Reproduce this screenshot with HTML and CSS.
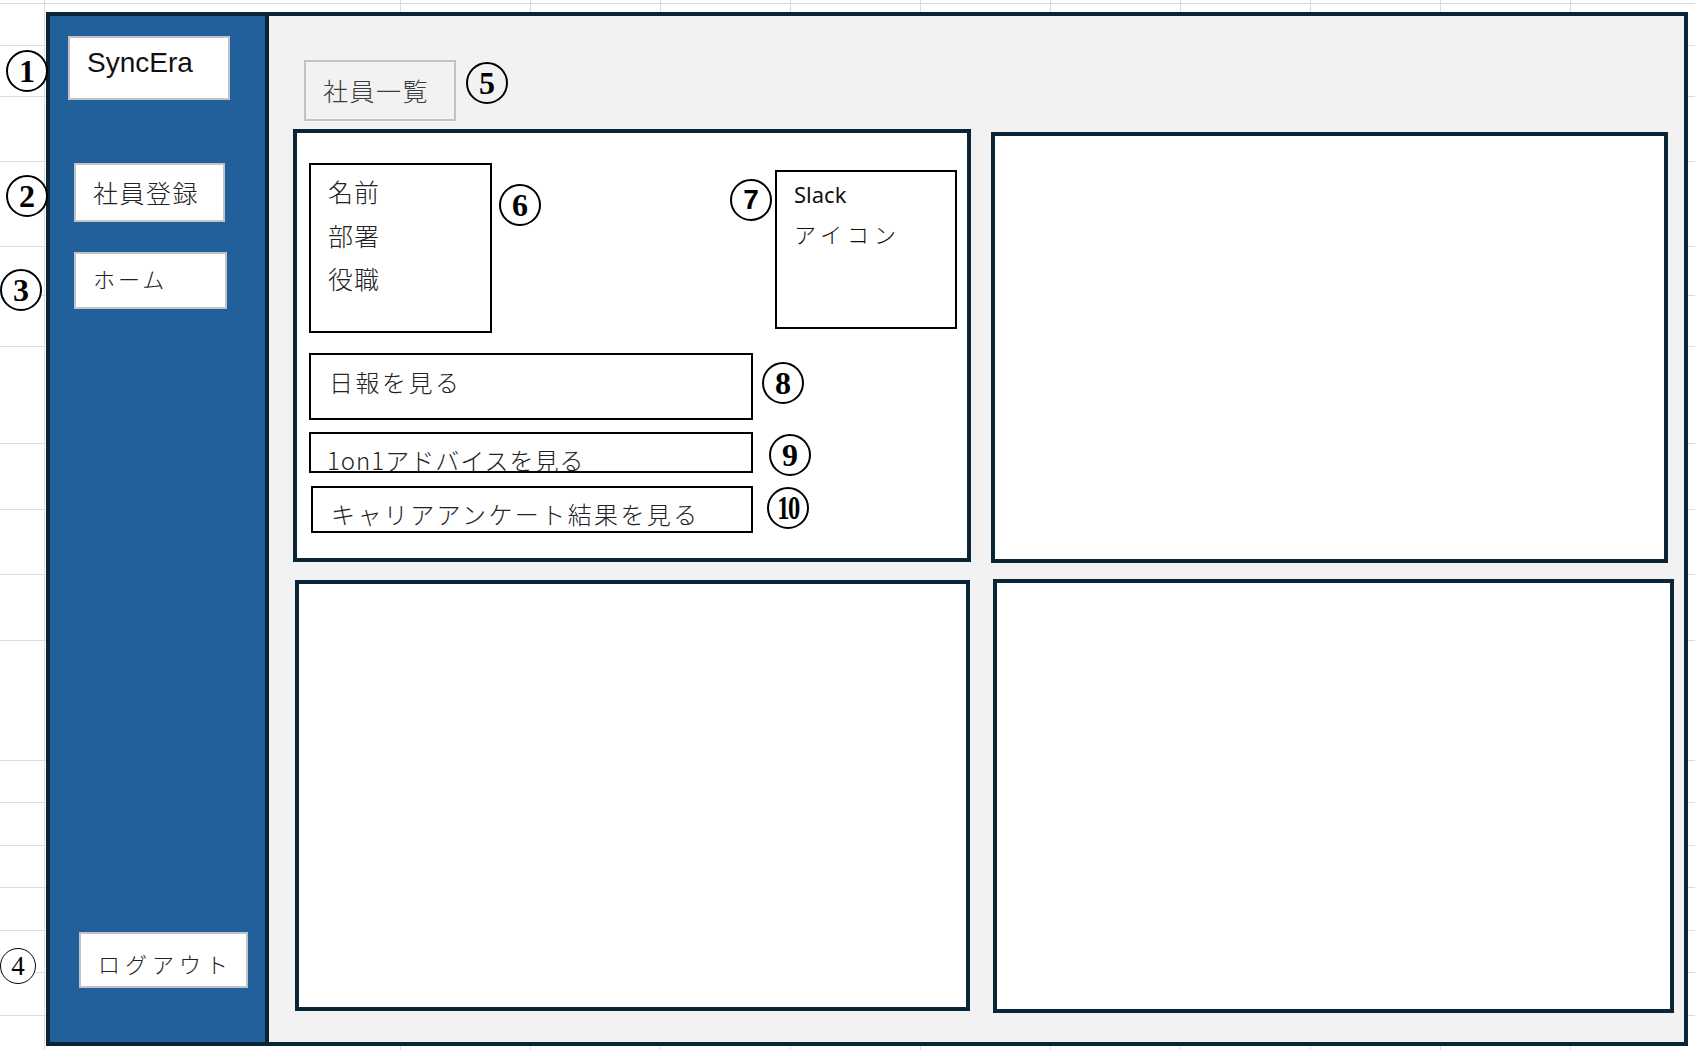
FILE: index.html
```html
<!DOCTYPE html>
<html lang="ja">
<head>
<meta charset="utf-8">
<title>SyncEra 社員一覧</title>
<link rel="stylesheet" href="styles.css">
</head>
<body>
<div class="frame">
  <aside class="sidebar">
    <div class="logo">SyncEra</div>
    <div class="side-btn btn-register">社員登録</div>
    <div class="side-btn btn-home">ホーム</div>
    <div class="side-btn btn-logout">ログアウト</div>
  </aside>
  <main class="main">
    <div class="page-title">社員一覧</div>
    <div class="cards">
      <section class="card card-1">
        <div class="card-top">
          <div class="profile">
            <div>名前</div>
            <div>部署</div>
            <div>役職</div>
          </div>
          <div class="slack">
            <div class="slack-title">Slack</div>
            <div class="slack-sub">アイコン</div>
          </div>
        </div>
        <div class="card-actions">
          <div class="action action-report">日報を見る</div>
          <div class="action action-1on1">1on1アドバイスを見る</div>
          <div class="action action-career">キャリアアンケート結果を見る</div>
        </div>
      </section>
      <section class="card card-2"></section>
      <section class="card card-3"></section>
      <section class="card card-4"></section>
    </div>
  </main>
</div>

<span class="mark m1 on-sheet">1</span>
<span class="mark m2 on-sheet">2</span>
<span class="mark m3 on-sheet">3</span>
<span class="mark m4 on-sheet">4</span>
<span class="mark m5">5</span>
<span class="mark m6">6</span>
<span class="mark m7">7</span>
<span class="mark m8">8</span>
<span class="mark m9">9</span>
<span class="mark m10"><span class="narrow">10</span></span>
</body>
</html>
```
FILE: styles.css
```css
html, body {
  margin: 0;
  padding: 0;
}

body {
  position: relative;
  width: 1695px;
  height: 1050px;
  overflow: hidden;
  background-color: #ffffff;
  background-image:
    linear-gradient(#dcdcdc, #dcdcdc),
    repeating-linear-gradient(to right, #dcdcdc 0 1px, transparent 1px 130px),
    linear-gradient(#dcdcdc, #dcdcdc),
    linear-gradient(#dcdcdc, #dcdcdc),
    linear-gradient(#dcdcdc, #dcdcdc),
    linear-gradient(#dcdcdc, #dcdcdc),
    linear-gradient(#dcdcdc, #dcdcdc),
    linear-gradient(#dcdcdc, #dcdcdc),
    linear-gradient(#dcdcdc, #dcdcdc),
    linear-gradient(#dcdcdc, #dcdcdc),
    linear-gradient(#dcdcdc, #dcdcdc),
    linear-gradient(#dcdcdc, #dcdcdc),
    linear-gradient(#dcdcdc, #dcdcdc),
    linear-gradient(#dcdcdc, #dcdcdc),
    linear-gradient(#dcdcdc, #dcdcdc),
    linear-gradient(#dcdcdc, #dcdcdc),
    linear-gradient(#dcdcdc, #dcdcdc),
    linear-gradient(#dcdcdc, #dcdcdc),
    linear-gradient(#dcdcdc, #dcdcdc),
    linear-gradient(#dcdcdc, #dcdcdc);
  background-repeat: no-repeat;
  background-position:
    44px 0,
    400px 0,
    0 3px,
    0 45px,
    0 96px,
    0 161px,
    0 246px,
    0 295px,
    0 346px,
    0 443px,
    0 509px,
    0 574px,
    0 640px,
    0 760px,
    0 802px,
    0 845px,
    0 887px,
    0 930px,
    0 972px,
    0 1015px;
  background-size:
    1px 100%,
    1300px 100%,
    100% 1px, 100% 1px, 100% 1px, 100% 1px, 100% 1px, 100% 1px,
    100% 1px, 100% 1px, 100% 1px, 100% 1px, 100% 1px, 100% 1px,
    100% 1px, 100% 1px, 100% 1px, 100% 1px, 100% 1px, 100% 1px;
  font-family: "Noto Sans CJK JP", "Noto Sans", sans-serif;
  color: #222;
}

/* ---------- frame ---------- */
.frame {
  box-sizing: border-box;
  margin: 12px 0 0 46px;
  width: 1642px;
  height: 1034px;
  border: 4px solid #0a2535;
  display: flex;
}

/* ---------- sidebar ---------- */
.sidebar {
  box-sizing: border-box;
  width: 219px;
  flex: 0 0 219px;
  background: #22609c;
  border-right: 4px solid #0a2535;
  display: flex;
  flex-direction: column;
  align-items: flex-start;
}

.logo {
  box-sizing: border-box;
  margin: 20px 0 0 18px;
  width: 162px;
  height: 64px;
  padding: 11px 0 0 17px;
  background: #fff;
  border: 2px solid #c3c3c3;
  font-family: "Liberation Sans", Arial, sans-serif;
  font-size: 28px;
  line-height: 28px;
  color: #111;
}

.side-btn {
  box-sizing: border-box;
  display: flex;
  align-items: center;
  background: #fff;
  border: 2px solid #c3c3c3;
  font-family: "Noto Sans CJK JP", sans-serif;
  font-weight: 300;
  color: #222;
  white-space: nowrap;
}

.btn-register {
  margin: 63px 0 0 24px;
  width: 151px;
  height: 59px;
  padding: 0 0 2px 17px;
  font-size: 25px;
  letter-spacing: 1.5px;
}

.btn-home {
  margin: 30px 0 0 24px;
  width: 153px;
  height: 57px;
  padding: 0 0 6px 17px;
  font-size: 22px;
  letter-spacing: 3px;
}

.btn-logout {
  margin: auto 0 54px 29px;
  width: 169px;
  height: 56px;
  padding: 6px 0 0 17px;
  font-size: 22px;
  letter-spacing: 5px;
}

/* ---------- main ---------- */
.main {
  flex: 1;
  background: #f2f2f2;
  padding-top: 44px;
  display: flex;
  flex-direction: column;
}

.page-title {
  box-sizing: border-box;
  margin-left: 35px;
  width: 152px;
  height: 61px;
  padding: 0 0 2px 17px;
  display: flex;
  align-items: center;
  border: 2px solid #c3c3c3;
  font-weight: 300;
  font-size: 25px;
  letter-spacing: 1.5px;
  color: #3c3c3c;
}

.cards {
  margin: 8px 0 0 24px;
  display: grid;
  grid-template-columns: 678px 683px;
  grid-template-rows: 434px 434px;
  column-gap: 20px;
  row-gap: 16px;
}

.card {
  box-sizing: border-box;
  background: #fff;
  border: 4px solid #0a2535;
}

.card-1 {
  margin-bottom: 1px;
  padding: 30px 10px 0 12px;
  display: flex;
  flex-direction: column;
}
.card-2 { margin: 3px 6px 0 0; }
.card-3 { margin: 1px 1px 2px 2px; }
.card-4 { margin: 0 0 0 2px; }

.card-top {
  display: flex;
  justify-content: space-between;
  align-items: flex-start;
}

.profile {
  box-sizing: border-box;
  width: 183px;
  height: 170px;
  padding: 5px 0 0 17px;
  border: 2px solid #000;
  font-weight: 300;
  font-size: 25px;
  line-height: 43.5px;
  letter-spacing: 1px;
}

.slack {
  box-sizing: border-box;
  width: 182px;
  height: 159px;
  margin-top: 7px;
  padding: 10px 0 0 17px;
  border: 2px solid #000;
}

.slack-title {
  font-family: "Noto Sans", sans-serif;
  font-size: 22px;
  line-height: 24px;
  color: #111;
}

.slack-sub {
  margin-top: 16px;
  font-weight: 300;
  font-size: 22px;
  line-height: 22px;
  letter-spacing: 5px;
  color: #111;
}

.card-actions {
  margin-top: 20px;
  display: flex;
  flex-direction: column;
  align-items: flex-start;
}

.action {
  box-sizing: border-box;
  border: 2px solid #000;
  background: #fff;
  font-weight: 300;
  font-size: 24px;
  white-space: nowrap;
}

.action-report {
  width: 444px;
  height: 67px;
  padding: 12px 0 0 18px;
  line-height: 30px;
  letter-spacing: 2.5px;
}

.action-1on1 {
  margin-top: 12px;
  width: 444px;
  height: 41px;
  overflow: hidden;
  padding: 14px 0 0 16px;
  line-height: 24px;
  letter-spacing: 1px;
}

.action-career {
  margin: 13px 0 0 2px;
  width: 442px;
  height: 47px;
  padding: 11px 0 0 18px;
  line-height: 30px;
  letter-spacing: 2.4px;
}

/* ---------- circled annotation numbers ---------- */
.mark {
  position: absolute;
  box-sizing: border-box;
  width: 42px;
  height: 42px;
  border: 2px solid #000;
  border-radius: 50%;
  display: flex;
  align-items: center;
  justify-content: center;
  font-family: "Liberation Serif", "Times New Roman", serif;
  font-weight: 700;
  font-size: 32px;
  line-height: 1;
  color: #000;
}

.on-sheet { background: #fff; }

.m1 { left: 6px; top: 50px; }
.m2 { left: 6px; top: 175px; }
.m3 { left: 0; top: 269px; }
.m4 {
  left: 0;
  top: 948px;
  width: 36px;
  height: 36px;
  border-width: 1.5px;
  font-weight: 400;
  font-size: 27px;
}
.m5 { left: 466px; top: 62px; }
.m6 { left: 499px; top: 184px; }
.m7 {
  left: 730px;
  top: 179px;
  font-family: "Liberation Sans", Arial, sans-serif;
  font-size: 28px;
}
.m8 { left: 762px; top: 362px; }
.m9 { left: 769px; top: 434px; }
.m10 { left: 767px; top: 487px; }

.narrow {
  display: inline-block;
  font-size: 34px;
  letter-spacing: -2px;
  transform: scaleX(0.72);
}
```
